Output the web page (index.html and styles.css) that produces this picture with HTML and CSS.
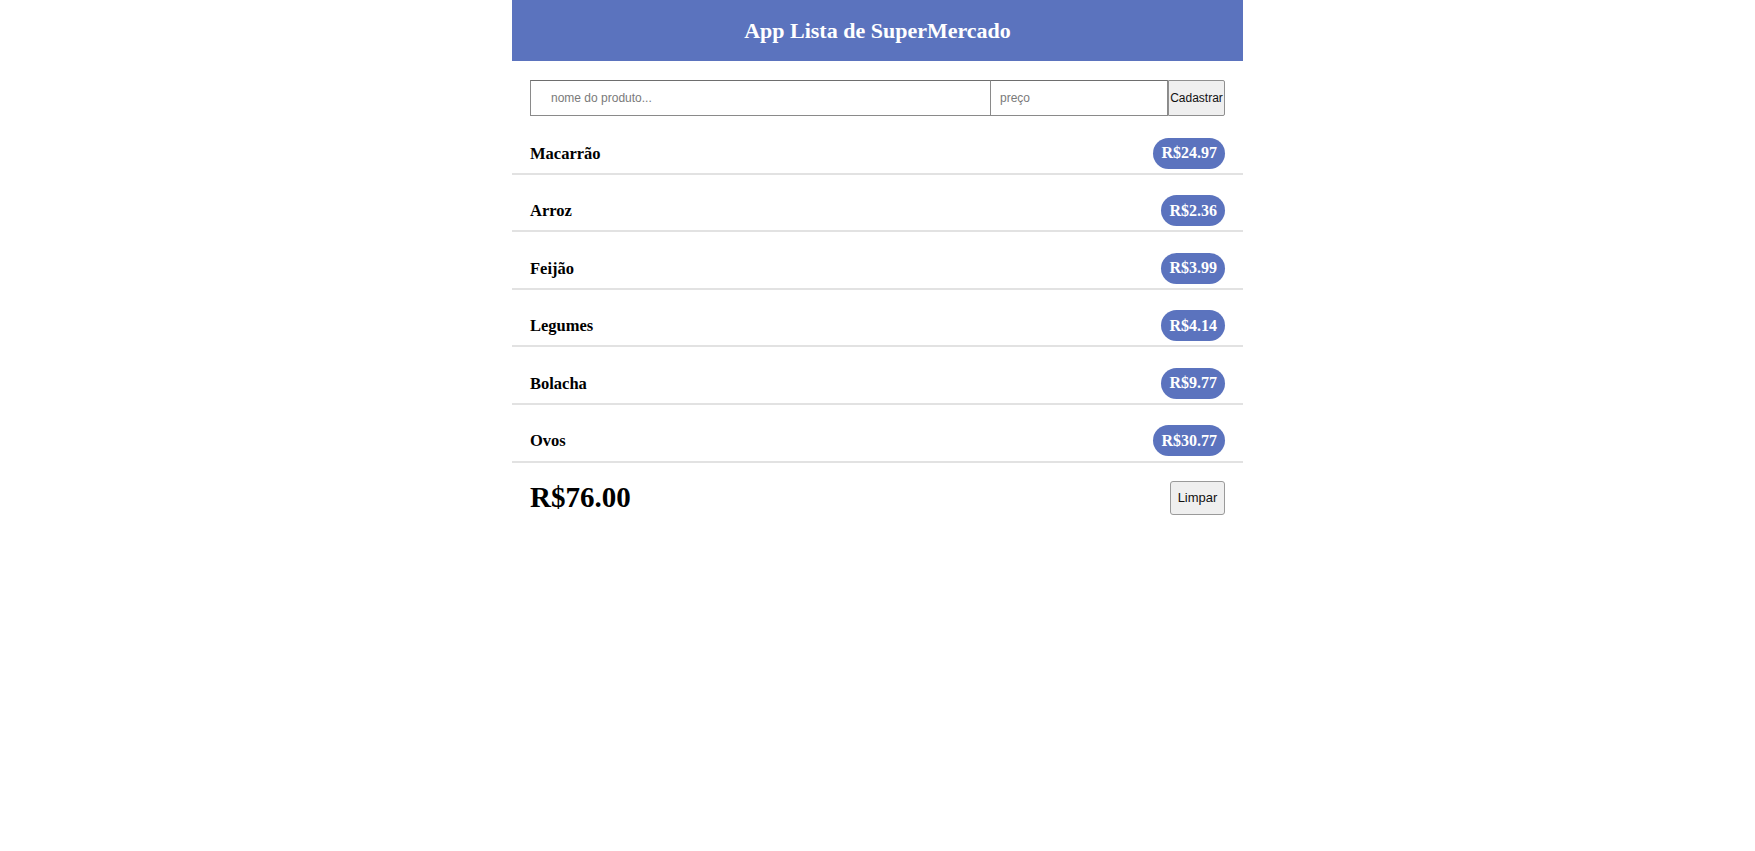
FILE: index.html
```html
<!DOCTYPE html>
<html lang="pt-BR">
<head>
<meta charset="utf-8">
<title>App Lista de SuperMercado</title>
<link rel="stylesheet" href="styles.css">
</head>
<body>
<div class="app">
  <header class="app-header">
    <h1 class="app-title">App Lista de SuperMercado</h1>
  </header>
  <form class="add-form">
    <input class="input input-name" type="text" placeholder="nome do produto...">
    <input class="input input-price" type="text" placeholder="preço">
    <button class="btn btn-add" type="button">Cadastrar</button>
  </form>
  <ul class="item-list">
    <li class="item"><span class="item-name">Macarrão</span><span class="badge">R$24.97</span></li>
    <li class="item"><span class="item-name">Arroz</span><span class="badge">R$2.36</span></li>
    <li class="item"><span class="item-name">Feijão</span><span class="badge">R$3.99</span></li>
    <li class="item"><span class="item-name">Legumes</span><span class="badge">R$4.14</span></li>
    <li class="item"><span class="item-name">Bolacha</span><span class="badge">R$9.77</span></li>
    <li class="item"><span class="item-name">Ovos</span><span class="badge">R$30.77</span></li>
  </ul>
  <div class="total-row">
    <span class="total">R$76.00</span>
    <button class="btn btn-clear" type="button">Limpar</button>
  </div>
</div>
</body>
</html>
```

FILE: styles.css
```css
* { box-sizing: border-box; }

body {
  margin: 0;
  background: #ffffff;
  font-family: "Liberation Serif", "Times New Roman", serif;
  color: #000;
}

.app {
  width: 731px;
  margin: 0 auto;
}

.app-header {
  height: 61px;
  background: #5b73be;
  display: flex;
  align-items: center;
  justify-content: center;
}

.app-title {
  margin: 0;
  font-size: 22px;
  font-weight: bold;
  color: #ffffff;
}

.add-form {
  display: flex;
  padding: 18.5px 18px 0;
}

.input {
  height: 36px;
  border: 1px solid #8a8a8a;
  border-top-color: #6e6e6e;
  font-family: "Liberation Sans", Arial, sans-serif;
  font-size: 12px;
  color: #222;
  outline: none;
  margin: 0;
}

.input::placeholder { color: #7a7a7a; }

.input-name {
  width: 461px;
  padding: 0 20px;
}

.input-price {
  width: 177px;
  padding: 0 9px;
  border-left: none;
}

.btn {
  font-family: "Liberation Sans", Arial, sans-serif;
  font-size: 12px;
  color: #111;
  background: #efefef;
  border: 1px solid #8f8f8f;
  border-radius: 2px;
  padding: 0;
  margin: 0;
}

.btn-add {
  width: 57px;
  height: 36px;
  border-radius: 0 2px 2px 0;
}

.item-list {
  list-style: none;
  margin: 1.5px 0 0;
  padding: 0;
}

.item {
  display: flex;
  justify-content: space-between;
  align-items: center;
  padding: 20.5px 18px 4.1px;
  border-bottom: 2px solid #e2e2e2;
}

.item-name {
  font-size: 16.5px;
  font-weight: bold;
  padding-top: 1px;
}

.badge {
  height: 31px;
  padding: 0 8px;
  border-radius: 16px;
  background: #5b73be;
  color: #ffffff;
  font-size: 16px;
  font-weight: bold;
  display: flex;
  align-items: center;
}

.total-row {
  display: flex;
  justify-content: space-between;
  align-items: center;
  padding: 18px 18px 0;
}

.total {
  font-size: 29px;
  font-weight: bold;
}

.btn-clear {
  width: 55px;
  height: 34px;
  font-size: 13px;
  border-color: #9a9a9a;
  border-radius: 3px;
}
```
